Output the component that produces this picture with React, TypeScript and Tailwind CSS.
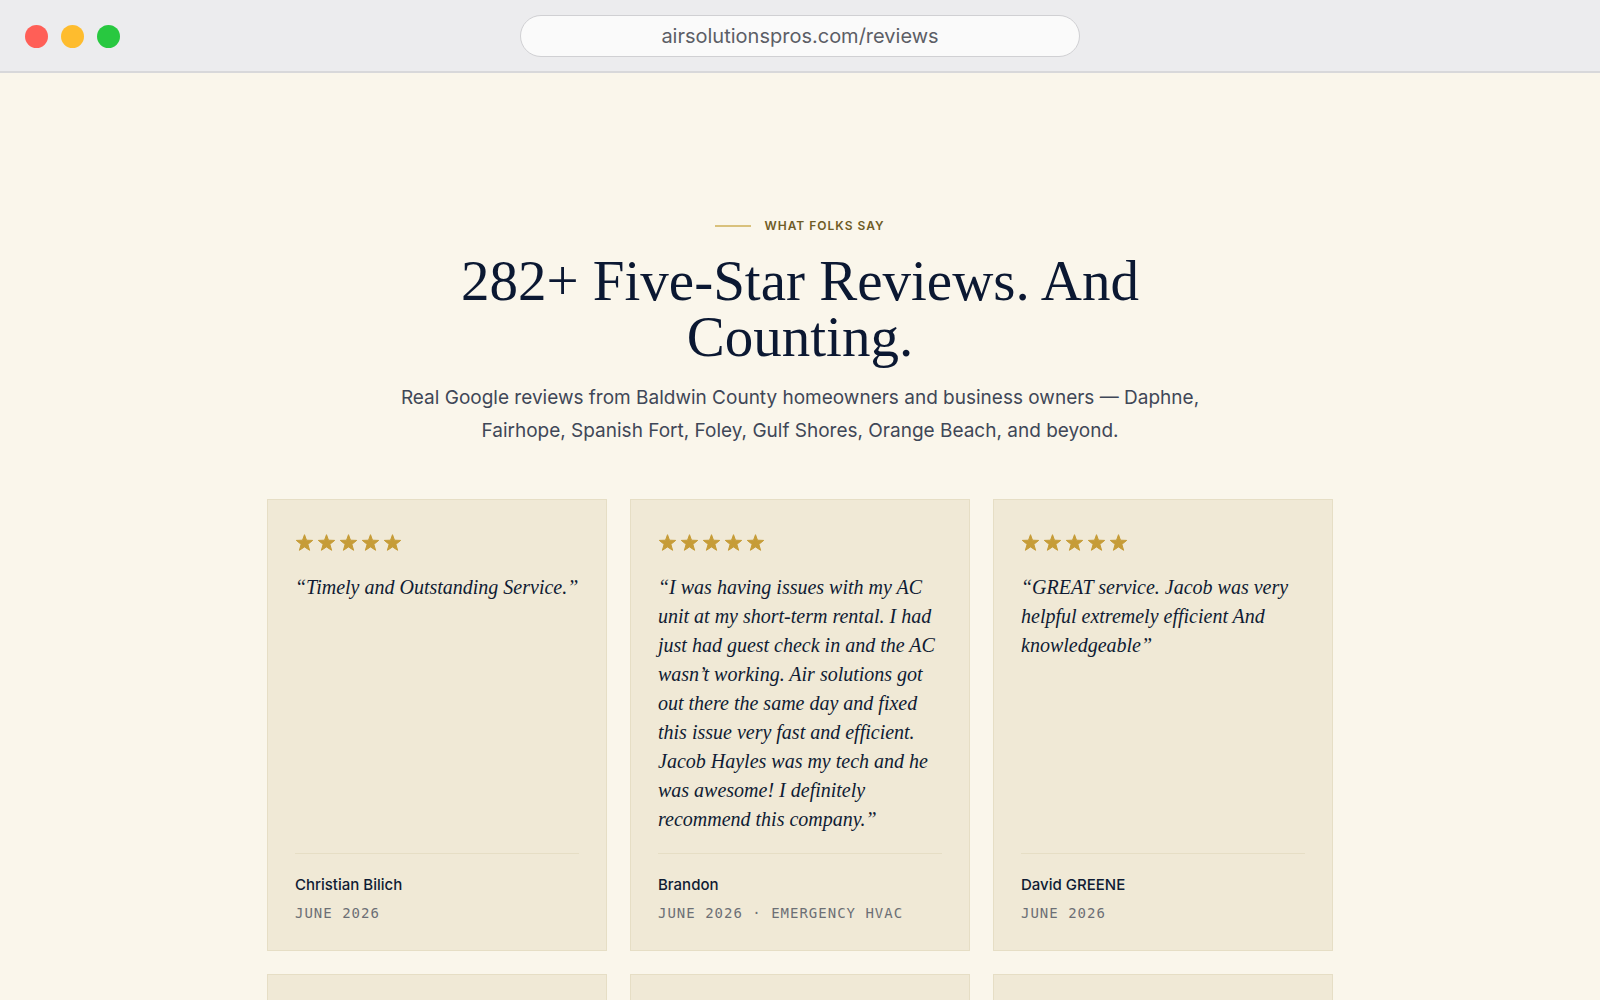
import React from "react";

type Review = { quote: string; name: string; meta: string };

const reviews: Review[] = [
  { quote: "Timely and Outstanding Service.", name: "Christian Bilich", meta: "June 2026" },
  {
    quote:
      "I was having issues with my AC unit at my short-term rental. I had just had guest check in and the AC wasn’t working. Air solutions got out there the same day and fixed this issue very fast and efficient. Jacob Hayles was my tech and he was awesome! I definitely recommend this company.",
    name: "Brandon",
    meta: "June 2026 · Emergency HVAC",
  },
  {
    quote: "GREAT service. Jacob was very helpful extremely efficient And knowledgeable",
    name: "David GREENE",
    meta: "June 2026",
  },
];

function Star() {
  return (
    <svg viewBox="0 0 18 18" className="size-[18px] overflow-visible" fill="#c69c37" aria-hidden="true">
      <path
        d="M9.5 .7l2 5.5 6.2.2-4.8 3.9 1.7 6-5.1-3.4-5.1 3.4 1.7-6L1.3 6.4l6.2-.2z"
        stroke="#c69c37"
        strokeWidth="1"
        strokeLinejoin="round"
      />
    </svg>
  );
}

function BrowserBar() {
  return (
    <header className="flex h-[73px] shrink-0 items-center justify-between border-b-2 border-[#d8d8da] bg-[#ececee] px-[25px] pt-px">
      <div className="flex flex-1 gap-[13px]">
        <button type="button" aria-label="Close" className="size-[23px] rounded-full bg-[#ff5f57]" />
        <button type="button" aria-label="Minimize" className="size-[23px] rounded-full bg-[#febc2e]" />
        <button type="button" aria-label="Zoom" className="size-[23px] rounded-full bg-[#28c840]" />
      </div>
      <input
        type="text"
        aria-label="Address"
        defaultValue="airsolutionspros.com/reviews"
        className="h-[42px] w-[560px] rounded-full border border-[#d0d0d3] bg-[#fafafa] text-center font-['Inter',sans-serif] text-[20px] text-[#5c5e66] outline-none"
      />
      <div className="flex-1" />
    </header>
  );
}

function ReviewCard({ quote, name, meta }: Review) {
  return (
    <article className="flex flex-col border border-[#e6dec5] bg-[#f0e9d6] px-[27px] pt-[34px] pb-[25px]">
      <div className="flex gap-1" role="img" aria-label="Five stars">
        <Star />
        <Star />
        <Star />
        <Star />
        <Star />
      </div>
      <blockquote className="mt-[21px] mb-[19px] flex-1 font-['Liberation_Serif',serif] text-[20px] leading-[29px] text-[#0f1b33] italic">
        {`“${quote}”`}
      </blockquote>
      <footer className="border-t border-[#e6dec5] pt-[19px]">
        <div className="font-['Inter',sans-serif] text-[15px] leading-6 font-medium text-[#0f1b33]">{name}</div>
        <div className="mt-1 font-['DejaVu_Sans_Mono',monospace] text-sm leading-6 tracking-[1px] text-[#6c6f75] uppercase">
          {meta}
        </div>
      </footer>
    </article>
  );
}

export default function App() {
  return (
    <div className="flex h-screen flex-col overflow-hidden bg-[#faf6eb]">
      <BrowserBar />
      <main className="px-6 pt-[143px]">
        <section className="mx-auto flex max-w-[820px] flex-col items-center text-center">
          <div className="flex items-center gap-[13px]">
            <span className="h-0.5 w-9 bg-[#d9c17c]" />
            <span className="font-['Inter',sans-serif] text-xs leading-5 font-semibold tracking-[1px] text-[#6f5c26] uppercase">
              What folks say
            </span>
          </div>
          <h1 className="mt-[17px] max-w-[760px] font-['Liberation_Serif',serif] text-[57px] leading-[56px] text-[#0b1832]">
            282+ Five-Star Reviews. And Counting.
          </h1>
          <p className="mt-4 font-['Inter',sans-serif] text-[19px] leading-[33px] text-[#3f4757]">
            Real Google reviews from Baldwin County homeowners and business owners — Daphne, Fairhope, Spanish Fort,
            Foley, Gulf Shores, Orange Beach, and beyond.
          </p>
        </section>
        <section className="mx-auto mt-[52px] grid max-w-[1066px] grid-cols-3 gap-[23px]">
          {reviews.map((review) => (
            <ReviewCard key={review.name} {...review} />
          ))}
          <article className="h-[452px] border border-[#e6dec5] bg-[#f0e9d6]" />
          <article className="h-[452px] border border-[#e6dec5] bg-[#f0e9d6]" />
          <article className="h-[452px] border border-[#e6dec5] bg-[#f0e9d6]" />
        </section>
      </main>
    </div>
  );
}
